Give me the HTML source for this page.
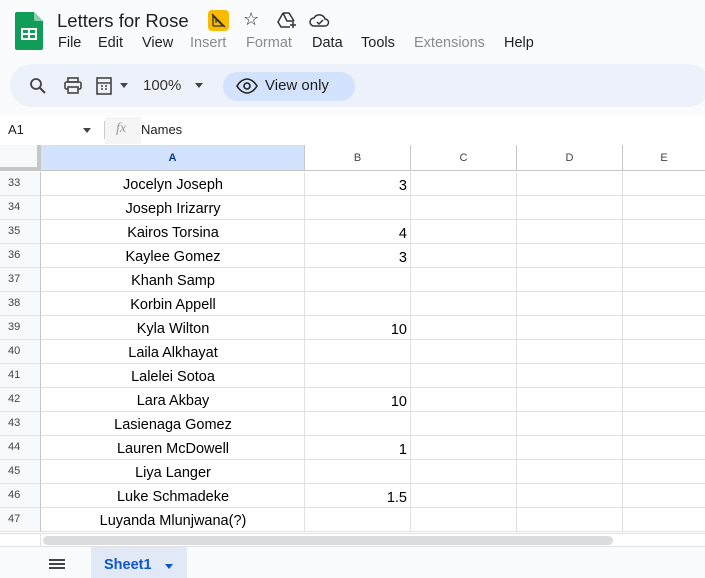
<!DOCTYPE html>
<html><head><style>
*{margin:0;padding:0;box-sizing:border-box}
body{width:705px;height:578px;overflow:hidden;background:#f9fbfd;font-family:"Liberation Sans",Arial,sans-serif;position:relative;color:#1f1f1f}
.abs{position:absolute}
.menu span{margin-right:0;position:absolute;top:0;font-size:14.5px}
.grid{position:absolute;left:0;top:145px;width:705px;height:388px;background:#fff}
.cell{position:absolute;font-size:14.5px;color:#000}
</style></head><body>
<svg class="abs" style="left:15px;top:12px" width="28" height="38" viewBox="0 0 28 38">
<path d="M2 0h17l9 9v27a2 2 0 0 1-2 2H2a2 2 0 0 1-2-2V2a2 2 0 0 1 2-2z" fill="#0f9d58"/>
<path d="M19 0l9 9h-7a2 2 0 0 1-2-2z" fill="#87ceac"/>
<rect x="6" y="16" width="16" height="12" fill="#fff"/>
<rect x="8" y="18" width="5" height="3" fill="#0f9d58"/><rect x="15" y="18" width="5" height="3" fill="#0f9d58"/>
<rect x="8" y="23" width="5" height="3" fill="#0f9d58"/><rect x="15" y="23" width="5" height="3" fill="#0f9d58"/>
</svg>
<div class="abs" style="left:57px;top:10px;font-size:18.5px">Letters for Rose</div>
<div class="abs" style="left:208px;top:10px;width:21px;height:21px;background:#f9bb00;border-radius:4px"></div>
<svg class="abs" style="left:211px;top:13px" width="15" height="15" viewBox="0 0 15 15"><path d="M2 13h11M2 13V3l10 10M5 6v4M8 9h2M1 1l13 13" stroke="#333" stroke-width="1.3" fill="none"/></svg>
<div class="abs" style="left:243px;top:9px;font-size:18px">☆</div>
<svg class="abs" style="left:276px;top:11px" width="22" height="18" viewBox="0 0 22 18"><path d="M7 2h6l5 8M7 2L2 11l3 5h9M7 2l4 8h7" stroke="#333" stroke-width="1.5" fill="none"/><path d="M17 11v6M14 14h6" stroke="#333" stroke-width="1.5"/></svg>
<svg class="abs" style="left:309px;top:12px" width="22" height="16" viewBox="0 0 22 16"><path d="M5 14a4 4 0 0 1 0-8 6 6 0 0 1 11 1 3.5 3.5 0 0 1 0 7z" stroke="#333" stroke-width="1.5" fill="none"/><path d="M8 10l2 2 4-4" stroke="#333" stroke-width="1.5" fill="none"/></svg>
<div class="abs menu" style="left:0;top:35px;width:705px;height:20px">
<span style="left:58px">File</span><span style="left:98px">Edit</span><span style="left:142px">View</span>
<span style="left:190px;color:#8a8a8a">Insert</span><span style="left:246px;color:#8a8a8a">Format</span>
<span style="left:312px">Data</span><span style="left:361px">Tools</span>
<span style="left:414px;color:#8a8a8a">Extensions</span><span style="left:504px">Help</span></div>
<div class="abs" style="left:10px;top:64px;width:700px;height:43px;background:#edf2fa;border-radius:22px"></div>
<svg class="abs" style="left:29px;top:77px" width="18" height="18" viewBox="0 0 18 18"><circle cx="7" cy="7" r="5" stroke="#444" stroke-width="1.8" fill="none"/><path d="M11 11l5 5" stroke="#444" stroke-width="2"/></svg>
<svg class="abs" style="left:64px;top:77px" width="18" height="17" viewBox="0 0 18 17"><rect x="4" y="1" width="10" height="4" stroke="#444" stroke-width="1.6" fill="none"/><rect x="1" y="5" width="16" height="7" rx="1.5" stroke="#444" stroke-width="1.6" fill="none"/><rect x="4" y="10" width="10" height="6" stroke="#444" stroke-width="1.6" fill="#edf2fa"/></svg>
<svg class="abs" style="left:95px;top:76px" width="20" height="20" viewBox="0 0 20 20"><rect x="2" y="2" width="14" height="16" stroke="#444" stroke-width="1.6" fill="none"/><path d="M2 7h14M6 10h2M10 10h2M6 13h2M10 13h2" stroke="#444" stroke-width="1.6"/></svg>
<div class="abs" style="left:120px;top:83px;border:4px solid transparent;border-top:5px solid #444"></div>
<div class="abs" style="left:143px;top:77px;font-size:15px;color:#333">100%</div>
<div class="abs" style="left:195px;top:83px;border:4px solid transparent;border-top:5px solid #444"></div>
<div class="abs" style="left:223px;top:72px;width:132px;height:29px;background:#d3e3fd;border-radius:15px"></div>
<svg class="abs" style="left:236px;top:78px" width="22" height="16" viewBox="0 0 22 16"><path d="M1 8C4 3 8 1 11 1s7 2 10 7c-3 5-7 7-10 7S4 13 1 8z" stroke="#222" stroke-width="1.6" fill="none"/><circle cx="11" cy="8" r="3" stroke="#222" stroke-width="1.6" fill="none"/></svg>
<div class="abs" style="left:265px;top:77px;font-size:15px;color:#1f1f1f">View only</div>
<div class="abs" style="left:0;top:116px;width:705px;height:29px;background:#fff"></div>
<div class="abs" style="left:8px;top:122px;font-size:13px">A1</div>
<div class="abs" style="left:83px;top:128px;border:4px solid transparent;border-top:5px solid #444"></div>
<div class="abs" style="left:104px;top:121px;width:1px;height:18px;background:#ccc"></div>
<div class="abs" style="left:105px;top:117px;width:36px;height:27px;background:#f5f5f5"></div>
<div class="abs" style="left:116px;top:121px;font-size:14px;font-style:italic;color:#999;font-family:'Liberation Serif',serif">fx</div>
<div class="abs" style="left:141px;top:122px;font-size:13px">Names</div>
<div class="grid" id="g"></div>
<div class="abs" style="left:0;top:533px;width:705px;height:13px;background:#fff;border-top:1px solid #e1e1e1"></div>
<div class="abs" style="left:40px;top:533px;width:1px;height:13px;background:#e1e1e1"></div>
<div class="abs" style="left:43px;top:536px;width:570px;height:9px;background:#dadce0;border-radius:5px"></div>
<div class="abs" style="left:0;top:546px;width:705px;height:32px;background:#f9fbfd;border-top:1px solid #e1e1e1"></div>
<div class="abs" style="left:49px;top:559px;width:16px;height:2px;background:#444;box-shadow:0 4px 0 #444,0 8px 0 #444"></div>
<div class="abs" style="left:91px;top:547px;width:96px;height:31px;background:#e1e9f7"></div>
<div class="abs" style="left:104px;top:557px;font-size:14.5px;color:#0b57d0;font-weight:bold">Sheet1</div>
<div class="abs" style="left:165px;top:564px;border:4px solid transparent;border-top:5px solid #0b57d0"></div>
<script>
var g=document.getElementById('g'),h='';
var cols=[[41,305,'A'],[305,411,'B'],[411,517,'C'],[517,623,'D'],[623,706,'E']];
h+='<div style="position:absolute;left:0;top:0;width:41px;height:26px;background:#f8f9fa;border-right:4px solid #c4c7c5;border-bottom:4px solid #c4c7c5"></div>';
cols.forEach(function(c,i){h+='<div style="position:absolute;left:'+c[0]+'px;top:0;width:'+(c[1]-c[0])+'px;height:26px;background:'+(i==0?'#d3e3fd':'#fff')+';border-right:1px solid #c4c7c5;border-bottom:1px solid #c4c7c5;text-align:center;line-height:26px;font-size:11px;color:#444;'+(i==0?'font-weight:bold;color:#0b3c8c':'')+'">'+c[2]+'</div>';});
var d=[['Jocelyn Joseph','3'],['Joseph Irizarry',''],['Kairos Torsina','4'],['Kaylee Gomez','3'],['Khanh Samp',''],['Korbin Appell',''],['Kyla Wilton','10'],['Laila Alkhayat',''],['Lalelei Sotoa',''],['Lara Akbay','10'],['Lasienaga Gomez',''],['Lauren McDowell','1'],['Liya Langer',''],['Luke Schmadeke','1.5'],['Luyanda Mlunjwana(?)','']];
d.forEach(function(r,i){var t=27+i*24;
h+='<div style="position:absolute;left:0;top:'+t+'px;width:41px;height:24px;background:#f8f9fa;border-right:1px solid #c4c7c5;border-bottom:1px solid #e1e1e1;font-size:11px;color:#444;line-height:23px;padding-left:8px">'+(33+i)+'</div>';
cols.forEach(function(c){h+='<div style="position:absolute;left:'+c[0]+'px;top:'+t+'px;width:'+(c[1]-c[0])+'px;height:24px;border-right:1px solid #e1e1e1;border-bottom:1px solid #e1e1e1"></div>';});
h+='<div class="cell" style="left:41px;top:'+(t+5)+'px;width:264px;text-align:center">'+r[0]+'</div>';
h+='<div class="cell" style="left:305px;top:'+(t+6)+'px;width:102px;text-align:right">'+r[1]+'</div>';
});
g.innerHTML=h;
</script>
</body></html>
